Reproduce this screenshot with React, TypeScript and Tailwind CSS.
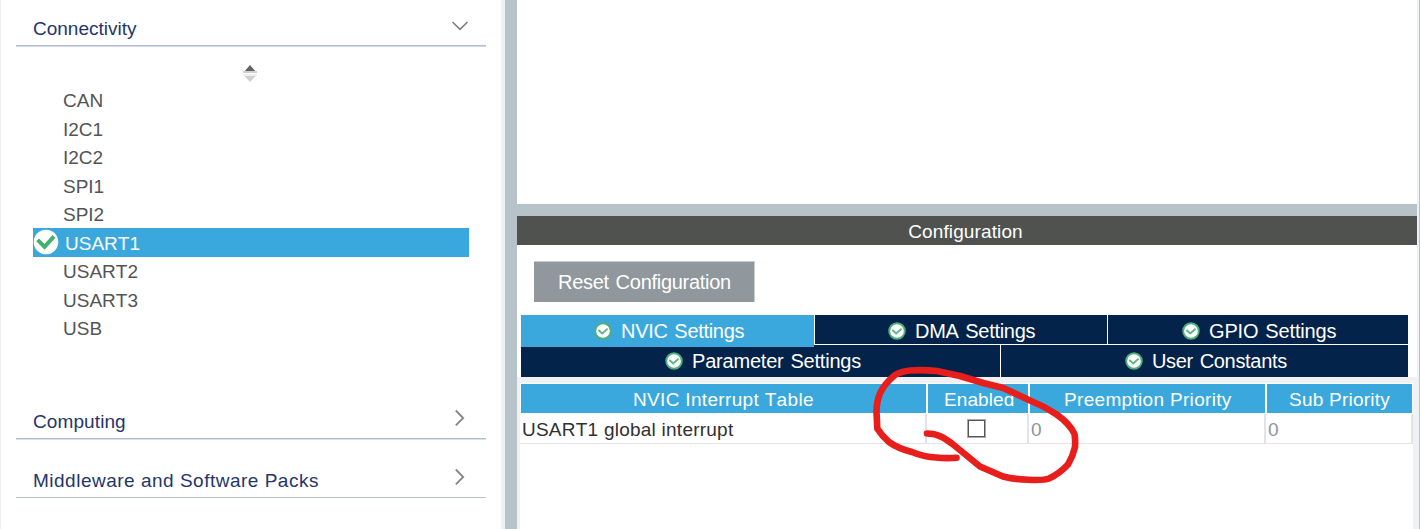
import type { ReactNode } from "react";

const peripherals = ["CAN", "I2C1", "I2C2", "SPI1", "SPI2", "USART1", "USART2", "USART3", "USB"];

function TabCheck() {
  return (
    <svg width="18" height="18" viewBox="0 0 18 18" className="shrink-0">
      <circle cx="9" cy="9" r="7.8" fill="#fff" stroke="#4db078" strokeWidth="1.9" />
      <path d="M4.4 8 8.2 11.4 13.6 6.6" fill="none" stroke="#5cb685" strokeWidth="1.9" />
    </svg>
  );
}

function SelectedCheck() {
  return (
    <svg width="26" height="26" viewBox="0 0 26 26" className="mt-px shrink-0">
      <circle cx="13" cy="13" r="12.3" fill="#fff" />
      <path d="M4.6 10.8 11.6 17.8 21 7.4" fill="none" stroke="#47af70" strokeWidth="4" />
    </svg>
  );
}

function ChevronRight() {
  return (
    <svg width="10" height="18" viewBox="0 0 10 18">
      <path d="M.8 1.5 8.2 9 .8 16.3" fill="none" stroke="#858585" strokeWidth="1.8" />
    </svg>
  );
}

function ChevronDown() {
  return (
    <svg width="18" height="10" viewBox="0 0 18 10">
      <path d="M1.5 1 9 8.3 16.5 1" fill="none" stroke="#808080" strokeWidth="1.7" />
    </svg>
  );
}

function Tab({ children, className }: { children: ReactNode; className: string }) {
  return (
    <div className={`flex items-start text-[20px] leading-[32px] text-white [word-spacing:1.5px] ${className}`}>
      <span className="mt-[7px] mr-[9px] block">
        <TabCheck />
      </span>
      {children}
    </div>
  );
}

function Sidebar() {
  return (
    <aside className="h-full w-[501px] shrink-0 border-l border-[#efefef] bg-white pl-[15px]">
      <div className="flex h-[47px] w-[470px] justify-between border-b border-[#d0d9ea] pl-[17px] text-[#25356b]">
        <div className="pt-[14px] leading-[29px]">Connectivity</div>
        <div className="mt-[21px] mr-[17px]">
          <ChevronDown />
        </div>
      </div>
      <div className="-mt-[2px] h-px w-[470px] bg-[#b0bcd9]" />
      <div className="flex h-[40px] w-[468px] justify-center pt-[19px]">
        <svg width="14" height="17" viewBox="0 0 14 17">
          <path d="M7 0 12.2 6H1.8Z" fill="#626262" />
          <path d="M0 6h14v2H0Z" fill="#d0d0d0" />
          <path d="M0 9h14v2H0Z" fill="#efefef" />
          <path d="M1.5 11h11L7 17Z" fill="#d0d0d0" />
        </svg>
      </div>
      <ul className="-mt-[0.5px] ml-[17px] h-[308.5px] w-[436px] text-[#545454]">
        {peripherals.map((name) =>
          name === "USART1" ? (
            <li key={name} className="flex h-[28.5px] items-start bg-[#3aa8dc] leading-[29px] text-white">
              <SelectedCheck />
              <span className="pt-[0.5px] pl-[6px]">{name}</span>
            </li>
          ) : (
            <li key={name} className="h-[28.5px] pt-[0.5px] pl-[30px] leading-[29px]">
              {name}
            </li>
          )
        )}
      </ul>
      <div className="flex h-[44px] w-[470px] justify-between pl-[17px] text-[#25356b]">
        <div className="pt-[13px] leading-[29px] tracking-[0.1px]">Computing</div>
        <div className="mt-[15px] mr-[21px]">
          <ChevronRight />
        </div>
      </div>
      <div className="h-[2px] w-[470px] border-t border-[#b3c0cf] bg-[#d5dfee]" />
      <div className="flex h-[57px] w-[470px] justify-between pl-[17px] text-[#25356b]">
        <div className="pt-[26px] leading-[29px] tracking-[0.5px]">Middleware and Software Packs</div>
        <div className="mt-[28px] mr-[21px]">
          <ChevronRight />
        </div>
      </div>
      <div className="h-px w-[470px] bg-[#b7c2cc]" />
    </aside>
  );
}

function Tabs() {
  return (
    <div className="ml-1 flex w-[887px] flex-col">
      <div className="flex h-[30px]">
        <Tab className="z-10 h-8 w-[293px] bg-[#3aa8dc] pl-[73px] tracking-[-0.3px]">NVIC Settings</Tab>
        <Tab className="ml-px h-[29px] w-[292px] bg-[#03234b] pl-[73px] tracking-[-0.3px]">DMA Settings</Tab>
        <Tab className="ml-px h-[29px] w-[300px] bg-[#03234b] pl-[74px] tracking-[-0.15px]">GPIO Settings</Tab>
      </div>
      <div className="flex h-8">
        <Tab className="h-8 w-[479px] bg-[#03234b] pl-[144px] tracking-[-0.2px]">Parameter Settings</Tab>
        <Tab className="ml-px h-8 w-[407px] bg-[#03234b] pl-[124px] tracking-[-0.32px]">User Constants</Tab>
      </div>
    </div>
  );
}

function InterruptTable() {
  return (
    <div className="h-[146px] w-[893px] bg-white pt-px">
      <div className="ml-px flex h-[29px] gap-[2px] leading-[31px] text-white">
        <div className="w-[405px] bg-[#3aa8dc] pl-[112px] tracking-[0.33px]">NVIC Interrupt Table</div>
        <div className="w-[100px] bg-[#3aa8dc] pl-[16px] tracking-[0.1px]">Enabled</div>
        <div className="w-[235px] bg-[#3aa8dc] pl-[34px] tracking-[0.32px]">Preemption Priority</div>
        <div className="w-[145px] bg-[#3aa8dc] pl-[22px] tracking-[0.24px]">Sub Priority</div>
      </div>
      <div className="mt-px flex h-[30px] border-b border-[#e0e3e7] leading-[31px] text-[#8c959c]">
        <div className="w-[407px] border-r-2 border-[#e0e3e7] pl-[2px] tracking-[0.24px] text-[#303030]">
          USART1 global interrupt
        </div>
        <div className="w-[102px] border-r-2 border-[#e0e3e7] pt-[5px] pl-[40px]">
          <div className="size-[19px] border border-[#aaa]">
            <div className="size-[17px] border border-[#555] bg-white" />
          </div>
        </div>
        <div className="w-[237px] border-r-2 border-[#e0e3e7] pl-[2px]">0</div>
        <div className="w-[147px] border-r-2 border-[#e0e3e7] pl-[2px]">0</div>
      </div>
    </div>
  );
}

function ConfigurationPane() {
  return (
    <main className="flex h-full w-[900px] shrink-0 flex-col bg-white">
      <div className="h-[204px]" />
      <div className="h-3 bg-[#b7c3c9]" />
      <div className="h-[29px] bg-[#505250] pr-[3px] text-center leading-[31px] tracking-[0.12px] text-white">
        Configuration
      </div>
      <div className="h-[70px] pt-4 pl-[17px]">
        <button className="block h-[41px] w-[221px] border-t border-r border-[#c5cccf] bg-[#90979d] pl-[24px] text-left text-[20px] leading-[41px] tracking-[-0.28px] [word-spacing:1.5px] text-white">
          Reset Configuration
        </button>
      </div>
      <Tabs />
      <div className="h-[152px] bg-[#eff1f3] pt-[6px] pl-[3px]">
        <InterruptTable />
      </div>
    </main>
  );
}

export default function App() {
  return (
    <div className="relative flex h-[529px] w-[1420px] overflow-hidden bg-white font-['Liberation_Sans',Arial,sans-serif] text-[19px] whitespace-nowrap [font-kerning:none]">
      <Sidebar />
      <div className="w-4 shrink-0 border-l-4 border-[#eff2f4] bg-[#b7c3c9]" />
      <ConfigurationPane />
      <div className="w-[3px] shrink-0 border-r border-[#b7c3c9] bg-[#eff1f3]" />
      <svg className="pointer-events-none absolute top-[360px] left-[865px] z-20" width="220" height="130" viewBox="865 360 220 130">
        <path
          d="M927 433.500C940 433.500 948 440.500 955 446L980 466.500L1003 476.500Q1015 479.500 1028 479.700Q1044 480.500 1049 478.500Q1059 474 1068 464.500Q1073 456 1075 447Q1075.500 440 1074.500 434Q1070 424 1056.700 414.500Q1044 406 1030 400.500L1003.300 388L983.300 383L960 376L937 371Q922 369.500 910 370.500Q901 371.500 895 375Q885 383 880 393.300Q876.500 402 876.500 412L877.300 428.500Q882 436 889 442Q898 448.500 912 452Q924 457 936 457.500Q946 458.500 956.500 457.800"
          fill="none"
          stroke="#e81e1c"
          strokeWidth="6.6"
          strokeLinecap="round"
          strokeLinejoin="round"
        />
      </svg>
    </div>
  );
}
